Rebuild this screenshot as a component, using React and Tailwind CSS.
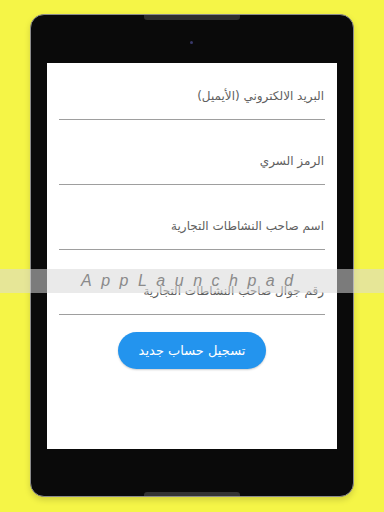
import React from 'react';

const fields = [
  'البريد الالكتروني (الأيميل)',
  'الرمز السري',
  'اسم صاحب النشاطات التجارية',
  'رقم جوال صاحب النشاطات التجارية',
];

const Field = ({ label, first }) => (
  <div className={first ? '' : 'mt-[31px]'}>
    <p className="h-5 leading-5 text-[12px] text-[#606060] pr-[1px]">{label}</p>
    <div className="mt-[13px] border-b border-[#9e9e9e]"></div>
  </div>
);

export default function App() {
  return (
    <div className="relative w-[384px] h-[512px] overflow-hidden bg-[#f5f547] pt-[14px] pl-[30px] font-['DejaVu_Sans',sans-serif]">
      {/* Tablet frame */}
      <div className="relative w-[324px] h-[483px] rounded-[14px] bg-[#0a0a0a] border border-[#8c8c8c] shadow-[0_3px_6px_rgba(0,0,0,0.15)] pt-[48px] pl-[16px]">
        <div className="absolute left-[113px] top-0 w-[96px] h-[5px] rounded-b-[3px] bg-[#2e2e2e]"></div>
        <div className="absolute left-[159px] top-[26px] w-[3px] h-[3px] rounded-full bg-[#3a3a6a]"></div>
        <div className="absolute left-[113px] bottom-0 w-[96px] h-[4px] rounded-t-[3px] bg-[#333]"></div>

        {/* Screen */}
        <div dir="rtl" className="w-[290px] h-[386px] bg-white px-3 pt-[23px]">
          {fields.map((f, i) => (
            <Field key={f} label={f} first={i === 0} />
          ))}
          <div className="mt-[17px] flex justify-center">
            <button className="w-[148px] h-[37px] rounded-full bg-[#2394ee] text-white text-[13px] shadow-[0_1px_2px_rgba(0,0,0,0.2)]">
              تسجيل حساب جديد
            </button>
          </div>
        </div>
      </div>

      {/* Watermark band */}
      <div className="absolute left-0 top-[269px] w-full h-[24px] bg-[rgba(216,216,216,0.55)] flex items-center">
        <span className="ml-[81px] italic text-[16px] leading-none text-[#8a8a8a] tracking-[9.5px] font-['Liberation_Sans',sans-serif]">
          AppLaunchpad
        </span>
      </div>
    </div>
  );
}
